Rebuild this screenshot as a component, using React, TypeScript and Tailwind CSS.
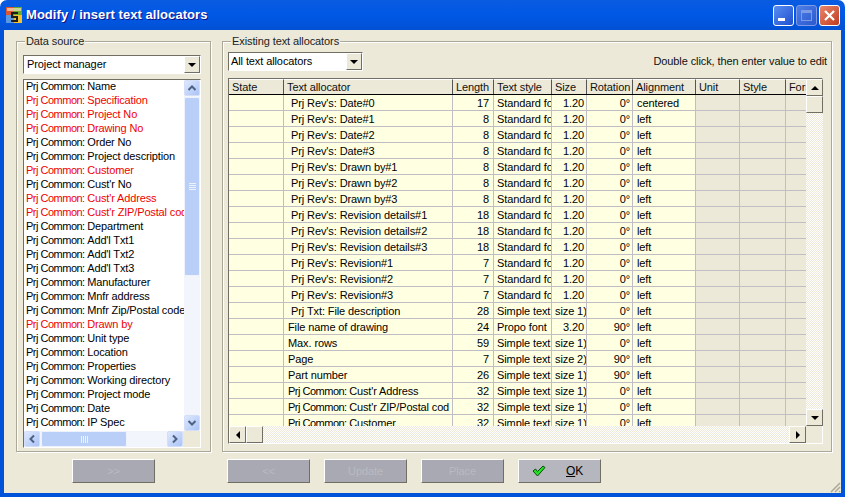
const font = "font-['Liberation_Sans',Arial,sans-serif]";

const sourceRows: [string, boolean][] = [
  ["Name", false],
  ["Specification", true],
  ["Project No", true],
  ["Drawing No", true],
  ["Order No", false],
  ["Project description", false],
  ["Customer", true],
  ["Cust'r No", false],
  ["Cust'r Address", true],
  ["Cust'r ZIP/Postal cod", true],
  ["Department", false],
  ["Add'l Txt1", false],
  ["Add'l Txt2", false],
  ["Add'l Txt3", false],
  ["Manufacturer", false],
  ["Mnfr address", false],
  ["Mnfr Zip/Postal code", false],
  ["Drawn by", true],
  ["Unit type", false],
  ["Location", false],
  ["Properties", false],
  ["Working directory", false],
  ["Project mode", false],
  ["Date", false],
  ["IP Spec", false],
];

type Row = [string, number, string, string, string, string, boolean];

const std = "Standard fo";
const simple = "Simple text";

const rows: Row[] = [
  ["Prj Rev's: Date#0", 17, std, "1.20", "0°", "centered", true],
  ["Prj Rev's: Date#1", 8, std, "1.20", "0°", "left", true],
  ["Prj Rev's: Date#2", 8, std, "1.20", "0°", "left", true],
  ["Prj Rev's: Date#3", 8, std, "1.20", "0°", "left", true],
  ["Prj Rev's: Drawn by#1", 8, std, "1.20", "0°", "left", true],
  ["Prj Rev's: Drawn by#2", 8, std, "1.20", "0°", "left", true],
  ["Prj Rev's: Drawn by#3", 8, std, "1.20", "0°", "left", true],
  ["Prj Rev's: Revision details#1", 18, std, "1.20", "0°", "left", true],
  ["Prj Rev's: Revision details#2", 18, std, "1.20", "0°", "left", true],
  ["Prj Rev's: Revision details#3", 18, std, "1.20", "0°", "left", true],
  ["Prj Rev's: Revision#1", 7, std, "1.20", "0°", "left", true],
  ["Prj Rev's: Revision#2", 7, std, "1.20", "0°", "left", true],
  ["Prj Rev's: Revision#3", 7, std, "1.20", "0°", "left", true],
  ["Prj Txt: File description", 28, simple, "size 1)", "0°", "left", true],
  ["File name of drawing", 24, "Propo font", "3.20", "90°", "left", false],
  ["Max. rows", 59, simple, "size 1)", "0°", "left", false],
  ["Page", 7, simple, "size 2)", "90°", "left", false],
  ["Part number", 26, simple, "size 1)", "90°", "left", false],
  ["Prj Common: Cust'r Address", 32, simple, "size 1)", "0°", "left", false],
  ["Prj Common: Cust'r ZIP/Postal cod", 32, simple, "size 1)", "0°", "left", false],
  ["Prj Common: Customer", 32, simple, "size 1)", "0°", "left", false],
];

const headers: [string, string][] = [
  ["State", "w-[55px]"],
  ["Text allocator", "w-[169px]"],
  ["Length", "w-[41px]"],
  ["Text style", "w-[58px]"],
  ["Size", "w-[35px]"],
  ["Rotation", "w-[46px]"],
  ["Alignment", "w-[63px]"],
  ["Unit", "w-[44px]"],
  ["Style", "w-[46px]"],
  ["Format", "w-[21px]"],
];

const classicRaised = "bg-[#ece9d8] border border-t-white border-l-white border-r-[#716f64] border-b-[#716f64]";
const dither = "bg-[repeating-conic-gradient(#fff_0_25%,#ece9d8_0_50%)] bg-[length:2px_2px]";
const xpBtn = "rounded-[2px] border border-[#d4def8] bg-gradient-to-br from-[#dfe8fd] to-[#aac4f6] flex items-center justify-center";
const xpThumb = "rounded-[2px] border border-[#eef2fd] bg-[#bacff7] flex items-center justify-center";

function Arrow({ dir }: { dir: "up" | "down" | "left" | "right" }) {
  const points = {
    up: "0,4 4,0 8,4",
    down: "0,0 8,0 4,4",
    left: "4,0 4,8 0,4",
    right: "0,0 0,8 4,4",
  }[dir];
  const vertical = dir === "up" || dir === "down";
  return (
    <svg width={vertical ? 8 : 4} height={vertical ? 4 : 8} viewBox={vertical ? "0 0 8 4" : "0 0 4 8"}>
      <polygon points={points} fill="#000" />
    </svg>
  );
}

function Chevron({ dir }: { dir: "up" | "down" | "left" | "right" }) {
  const d = {
    up: "M1.5 7 L5 3.5 L8.5 7",
    down: "M1.5 3 L5 6.5 L8.5 3",
    left: "M7 1.5 L3.5 5 L7 8.5",
    right: "M3 1.5 L6.5 5 L3 8.5",
  }[dir];
  return (
    <svg width="10" height="10" viewBox="0 0 10 10" fill="none">
      <path d={d} stroke="#4d6185" strokeWidth="2" />
    </svg>
  );
}

function ComboArrow() {
  return (
    <div className={`${classicRaised} w-4 h-full flex items-center justify-center shrink-0`}>
      <Arrow dir="down" />
    </div>
  );
}

function GroupBox({ title, className, children }: { title: string; className: string; children: React.ReactNode }) {
  return (
    <div className={`relative border border-[#aca899] shadow-[inset_1px_1px_0_#fff,1px_1px_0_#fff] ${className}`}>
      <span className="absolute -top-[7px] left-[8px] bg-[#ece9d8] px-[1px] text-[11px] leading-[13px] text-[#222]">{title}</span>
      {children}
    </div>
  );
}

function DisabledButton({ label, className = "" }: { label: string; className?: string }) {
  return (
    <div
      className={`h-[24px] w-[83px] flex items-center justify-center bg-[#a9a9b3] border border-t-white border-l-white border-r-[#716f64] border-b-[#716f64] text-[11px] text-[#b9b9c1] ${className}`}
    >
      {label}
    </div>
  );
}

// "Prj Common: " sets tighter in the original than the rest of the label
function Allocator({ text }: { text: string }) {
  const prefix = "Prj Common: ";
  if (!text.startsWith(prefix)) return <>{text}</>;
  return (
    <>
      <span className="tracking-[-0.5px]">{prefix}</span>
      <span className="tracking-[-0.15px]">{text.slice(prefix.length)}</span>
    </>
  );
}

function TitleIcon() {
  return (
    <svg width="16" height="16" viewBox="0 0 16 16" className="shrink-0">
      <rect width="8" height="8" fill="#e0562c" />
      <rect x="8" width="8" height="8" fill="#6aa82e" />
      <rect y="8" width="8" height="8" fill="#5b98e4" />
      <rect x="8" y="8" width="8" height="8" fill="#f2c230" />
      <rect x="1" y="1" width="14" height="3" fill="#f4e4c0" opacity="0.7" />
      <path d="M5 5 H12 V7 H7 V9 H12 V15 H5 V13 H10 V11 H5 Z" fill="#1d1d1d" />
    </svg>
  );
}

export default function App() {
  return (
    <div className={`${font} w-[845px] h-[497px] flex flex-col overflow-hidden bg-white tracking-[-0.1px]`}>
      <div className="h-[30px] shrink-0 rounded-t-[7px] flex items-center pl-[6px] pr-[5px] gap-[4px] bg-gradient-to-b from-[#0a5be0] via-[#0058e6] to-[#0251d3]">
        <TitleIcon />
        <span className="text-[13px] font-bold text-white tracking-[0.05px] [text-shadow:1px_1px_#0f1089]">Modify / insert text allocators</span>
        <div className="ml-auto flex gap-[2px]">
          <div className="w-[21px] h-[21px] rounded-[3px] border border-white bg-gradient-to-br from-[#5a8df0] to-[#1f4fd0] flex items-end pl-[4px] pb-[4px]">
            <div className="w-[7px] h-[3px] bg-white" />
          </div>
          <div className="w-[21px] h-[21px] rounded-[3px] border border-[#7f9be6] bg-gradient-to-br from-[#4f7fe6] to-[#2a58cf] flex items-center justify-center">
            <div className="w-[11px] h-[11px] border border-[#7f9be6] border-t-[3px]" />
          </div>
          <div className="w-[21px] h-[21px] rounded-[3px] border border-white bg-gradient-to-br from-[#e8866a] to-[#c0391b] flex items-center justify-center">
            <svg width="13" height="13" viewBox="0 0 13 13">
              <path d="M2 2 L11 11 M11 2 L2 11" stroke="#fff" strokeWidth="2.2" />
            </svg>
          </div>
        </div>
      </div>

      <div className="flex-1 min-h-0 border-x-[4px] border-b-[4px] border-[#0052d9] bg-[#ece9d8] relative flex flex-col pt-[11px] pl-[12px] pr-[9px]">
        <div className="flex gap-[11px] h-[411px] shrink-0">
          <GroupBox title="Data source" className="w-[195px] pt-[13px] pl-[6px] pr-[9px]">
            <div className="h-[19px] flex border border-t-[#716f64] border-l-[#716f64] border-r-white border-b-white bg-white text-[11px] leading-[17px]">
              <span className="flex-1 pl-[3px] text-black">Project manager</span>
              <ComboArrow />
            </div>
            <div className="mt-[5px] h-[369px] flex flex-col border border-t-[#716f64] border-l-[#716f64] border-r-white border-b-white bg-white">
              <div className="flex flex-1 min-h-0">
                <div className="flex-1 pl-[2px] overflow-hidden">
                  {sourceRows.map(([label, red]) => (
                    <div key={label} className={`h-[14px] leading-[13px] text-[11px] whitespace-nowrap overflow-hidden ${red ? "text-[#f00000]" : "text-black"}`}>
                      <Allocator text={`Prj Common: ${label}`} />
                    </div>
                  ))}
                </div>
                <div className="w-[16px] shrink-0 flex flex-col bg-[#f3f5fc]">
                  <div className={`${xpBtn} h-[16px]`}><Chevron dir="up" /></div>
                  <div className={`${xpThumb} mt-[1px] h-[179px] flex-col gap-[1px]`}>
                    <div className="w-[7px] h-[1px] bg-[#eef2fd]" />
                    <div className="w-[7px] h-[1px] bg-[#eef2fd]" />
                    <div className="w-[7px] h-[1px] bg-[#eef2fd]" />
                    <div className="w-[7px] h-[1px] bg-[#eef2fd]" />
                  </div>
                  <div className="flex-1" />
                  <div className={`${xpBtn} h-[16px]`}><Chevron dir="down" /></div>
                </div>
              </div>
              <div className="h-[16px] shrink-0 flex items-stretch bg-[#f3f5fc]">
                <div className={`${xpBtn} w-[16px]`}><Chevron dir="left" /></div>
                <div className={`${xpThumb} ml-[1px] w-[86px] gap-[1px]`}>
                  <div className="w-[1px] h-[7px] bg-[#eef2fd]" />
                  <div className="w-[1px] h-[7px] bg-[#eef2fd]" />
                  <div className="w-[1px] h-[7px] bg-[#eef2fd]" />
                  <div className="w-[1px] h-[7px] bg-[#eef2fd]" />
                </div>
                <div className="flex-1" />
                <div className={`${xpBtn} w-[16px]`}><Chevron dir="right" /></div>
                <div className="w-[17px] bg-[#ece9d8]" />
              </div>
            </div>
          </GroupBox>

          <GroupBox title="Existing text allocators" className="w-[611px] pt-[10px] pl-[5px] pr-[4px]">
            <div className="flex items-center h-[19px]">
              <div className="h-[19px] w-[135px] flex border border-t-[#716f64] border-l-[#716f64] border-r-white border-b-white bg-white text-[11px] leading-[17px]">
                <span className="flex-1 pl-[2px] text-black">All text allocators</span>
                <ComboArrow />
              </div>
              <span className="ml-auto text-[11px] text-[#111] pb-[1px]">Double click, then enter value to edit</span>
            </div>
            <div className="mt-[7px] h-[366px] w-[595px] flex flex-col border border-t-[#716f64] border-l-[#716f64] border-r-white border-b-white bg-[#ece9d8]">
              <div className="flex flex-1 min-h-0">
                <div className="w-[577px] shrink-0 overflow-hidden flex flex-col">
                  <div className="flex h-[16px] shrink-0 border-b border-black">
                    {headers.map(([label, w]) => (
                      <div
                        key={label}
                        className={`${w} shrink-0 h-[15px] border-t border-t-white border-r border-r-[#555] pl-[3px] text-[11px] leading-[14px] text-[#111] whitespace-nowrap overflow-hidden`}
                      >
                        {label}
                      </div>
                    ))}
                  </div>
                  <div className="flex-1 overflow-hidden">
                    {rows.map((r) => (
                      <div key={r[0]} className="flex h-[16px] text-[11px] leading-[16px] text-black">
                        <div className="w-[55px] shrink-0 bg-[#ffffe1] border-b border-r border-[#c0bdc4]" />
                        <div className={`w-[169px] shrink-0 bg-[#ffffe1] border-b border-r border-[#c0bdc4] whitespace-nowrap overflow-hidden ${r[6] ? "pl-[7px]" : "pl-[4px]"}`}><Allocator text={r[0]} /></div>
                        <div className="w-[41px] shrink-0 bg-[#ffffe1] border-b border-r border-[#c0bdc4] text-right pr-[4px]">{r[1]}</div>
                        <div className="w-[58px] shrink-0 bg-[#ffffe1] border-b border-r border-[#c0bdc4] pl-[3px] whitespace-nowrap overflow-hidden">{r[2]}</div>
                        <div className={`w-[35px] shrink-0 bg-[#ffffe1] border-b border-r border-[#c0bdc4] whitespace-nowrap overflow-hidden ${r[3].startsWith("size") ? "pl-[3px]" : "text-right pr-[2px]"}`}>{r[3]}</div>
                        <div className="w-[46px] shrink-0 bg-[#ffffe1] border-b border-r border-[#c0bdc4] text-right pr-[2px]">{r[4]}</div>
                        <div className="w-[63px] shrink-0 bg-[#ffffe1] border-b border-r border-[#c0bdc4] pl-[4px]">{r[5]}</div>
                        <div className="w-[44px] shrink-0 border-b border-r border-[#c0bdc4]" />
                        <div className="w-[46px] shrink-0 border-b border-r border-[#c0bdc4]" />
                        <div className="w-[21px] shrink-0 border-b border-[#c0bdc4]" />
                      </div>
                    ))}
                  </div>
                </div>
                <div className={`w-[17px] shrink-0 flex flex-col ${dither}`}>
                  <div className={`${classicRaised} h-[17px] flex items-center justify-center`}><Arrow dir="up" /></div>
                  <div className={`${classicRaised} h-[17px]`} />
                  <div className="flex-1" />
                  <div className={`${classicRaised} h-[17px] flex items-center justify-center`}><Arrow dir="down" /></div>
                </div>
              </div>
              <div className="h-[17px] shrink-0 flex">
                <div className={`w-[577px] flex ${dither}`}>
                  <div className={`${classicRaised} w-[17px] flex items-center justify-center`}><Arrow dir="left" /></div>
                  <div className={`${classicRaised} w-[17px]`} />
                  <div className="flex-1" />
                  <div className={`${classicRaised} w-[17px] flex items-center justify-center`}><Arrow dir="right" /></div>
                </div>
              </div>
            </div>
          </GroupBox>
        </div>

        <div className="flex mt-[7px] pl-[56px]">
          <DisabledButton label=">>" />
          <DisabledButton label="<<" className="ml-[72px]" />
          <DisabledButton label="Update" className="ml-[14px]" />
          <DisabledButton label="Place" className="ml-[14px]" />
          <div className="ml-[14px] h-[24px] w-[83px] flex items-center pl-[13px] bg-[#b6b6be] border border-t-white border-l-white border-r-[#716f64] border-b-[#716f64] text-[12px] text-black">
            <svg width="14" height="12" viewBox="0 0 14 12" className="shrink-0">
              <path d="M1 6 L3.5 4 L5.5 6.5 L11 1 L13 2.5 L5.5 11 Z" fill="#22e022" stroke="#0b4d0b" strokeWidth="1" />
            </svg>
            <span className="ml-[20px]"><span className="underline">O</span>K</span>
          </div>
        </div>

        <svg width="12" height="12" viewBox="0 0 12 12" className="absolute right-0 bottom-0">
          <path d="M11 2 L2 11 M11 6 L6 11 M11 10 L10 11" stroke="#aca899" strokeWidth="1.5" />
        </svg>
      </div>
    </div>
  );
}
